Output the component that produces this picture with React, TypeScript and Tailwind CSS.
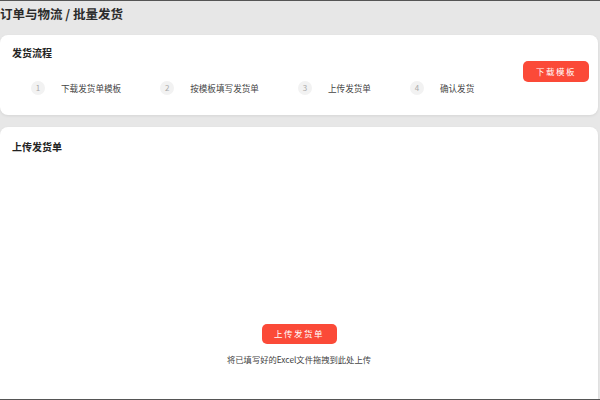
const steps = ["下载发货单模板", "按模板填写发货单", "上传发货单", "确认发货"];

const font = { fontFamily: '"Noto Sans CJK SC", "Noto Sans", sans-serif' };

export default function App() {
  return (
    <div
      style={font}
      className="w-[600px] h-[400px] bg-[#e7e7e7] border-t border-b border-[#555] overflow-hidden flex flex-col pr-[2px] text-[#333]"
    >
      {/* page title */}
      <div className="h-[26px] flex items-center text-[12.5px] font-bold text-[#2b2b2b] leading-none">
        订单与物流 / 批量发货
      </div>

      {/* shipping steps */}
      <div className="mt-[8px] h-[80px] bg-white rounded-lg shadow-[0_1px_3px_rgba(0,0,0,0.08)] pl-3 pr-[9px] flex items-center">
        <div className="flex-1 flex flex-col self-stretch">
          <div className="mt-[12px] text-[10px] font-semibold leading-[12px] text-[#222]">发货流程</div>
          <div className="mt-[22px] ml-[19px] flex items-center gap-[39px]">
            {steps.map((s, i) => (
              <div key={s} className="flex items-center gap-[16px]">
                <span className="w-[14px] h-[14px] rounded-full bg-[#f2f2f2] text-[#aaa] text-[8px] flex items-center justify-center">
                  {i + 1}
                </span>
                <span className="text-[8.6px] text-[#444] leading-none">{s}</span>
              </div>
            ))}
          </div>
        </div>
        <button className="mt-[-7px] w-[66px] h-[21px] rounded-[5px] bg-[#fb4a38] text-white text-[8.5px] tracking-[1.5px] flex items-center justify-center">
          下载模板
        </button>
      </div>

      {/* upload area */}
      <div className="mt-[12px] flex-1 bg-white rounded-t-lg shadow-[0_1px_3px_rgba(0,0,0,0.08)] px-3 flex flex-col">
        <div className="mt-[14px] text-[10px] font-semibold leading-[12px] text-[#222]">上传发货单</div>
        <div className="flex-1" />
        <div className="flex flex-col items-center mb-[36px]">
          <button className="w-[75px] h-[20px] rounded-[5px] bg-[#fb4a38] text-white text-[8.5px] tracking-[1.5px] flex items-center justify-center">
            上传发货单
          </button>
          <div className="mt-[11px] text-[8.3px] text-[#444] leading-none">将已填写好的Excel文件拖拽到此处上传</div>
        </div>
      </div>
    </div>
  );
}
